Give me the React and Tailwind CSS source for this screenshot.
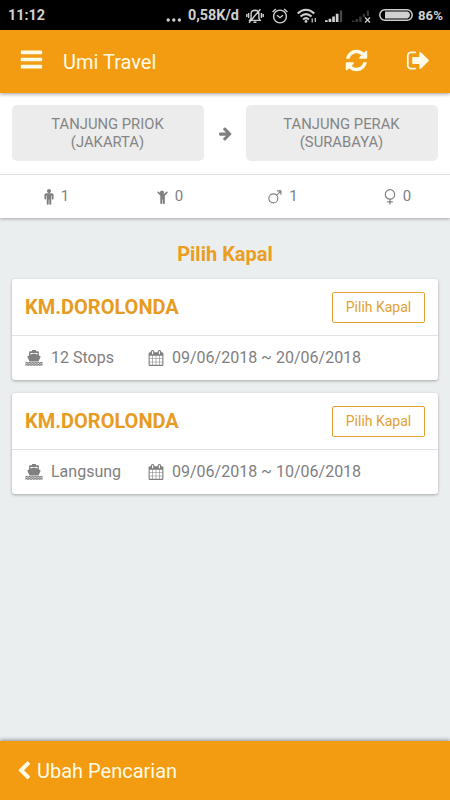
const paths = {
  bars: 'M1664 1344v128q0 26-19 45t-45 19h-1408q-26 0-45-19t-19-45v-128q0-26 19-45t45-19h1408q26 0 45 19t19 45zm0-512v128q0 26-19 45t-45 19h-1408q-26 0-45-19t-19-45v-128q0-26 19-45t45-19h1408q26 0 45 19t19 45zm0-512v128q0 26-19 45t-45 19h-1408q-26 0-45-19t-19-45v-128q0-26 19-45t45-19h1408q26 0 45 19t19 45z',
  refresh: 'M1639 1056q0 5-1 7-64 268-268 434.5t-478 166.5q-146 0-282.5-55t-243.5-157l-129 129q-19 19-45 19t-45-19-19-45v-448q0-26 19-45t45-19h448q26 0 45 19t19 45-19 45l-137 137q71 66 161 102t187 36q134 0 250-65t186-179q11-17 53-117 8-23 30-23h192q13 0 22.5 9.5t9.5 22.5zm25-800v448q0 26-19 45t-45 19h-448q-26 0-45-19t-19-45 19-45l138-138q-148-137-349-137-134 0-250 65t-186 179q-11 17-53 117-8 23-30 23h-199q-13 0-22.5-9.5t-9.5-22.5v-7q65-268 270-434.5t480-166.5q146 0 284 55.5t245 156.5l130-129q19-19 45-19t45 19 19 45z',
  signOut: 'M704 1440q0 4 1 20t.5 26.5-3 23.5-10 19.5-20.5 6.5h-320q-119 0-203.5-84.5t-84.5-203.5v-704q0-119 84.5-203.5t203.5-84.5h320q13 0 22.5 9.5t9.5 22.5q0 4 1 20t.5 26.5-3 23.5-10 19.5-20.5 6.5h-320q-66 0-113 47t-47 113v704q0 66 47 113t113 47h312l11.5 1 11.5 3 8 5.5 7 9 2 13.5zm928-544q0 26-19 45l-544 544q-19 19-45 19t-45-19-19-45v-288h-448q-26 0-45-19t-19-45v-384q0-26 19-45t45-19h448v-288q0-26 19-45t45-19 45 19l544 544q19 19 19 45z',
  chevronLeft: 'M1427 301l-531 531 531 531q19 19 19 45t-19 45l-166 166q-19 19-45 19t-45-19l-742-742q-19-19-19-45t19-45l742-742q19-19 45-19t45 19l166 166q19 19 19 45t-19 45z',
  arrowRight: 'M1600 960q0 54-37 91l-651 651q-39 37-91 37-51 0-90-37l-75-75q-38-38-38-91t38-91l293-293h-704q-52 0-84.5-37.5t-32.5-90.5v-128q0-53 32.5-90.5t84.5-37.5h704l-293-294q-38-36-38-90t38-90l75-75q38-38 90-38 53 0 91 38l651 651q37 35 37 90z',
  male: 'M1408 672v416q0 40-28 68t-68 28-68-28-28-68v-352h-64v912q0 46-33 79t-79 33-79-33-33-79v-464h-64v464q0 46-33 79t-79 33-79-33-33-79v-912h-64v352q0 40-28 68t-68 28-68-28-28-68v-416q0-80 56-136t136-56h640q80 0 136 56t56 136zm-288-448q0 93-65.5 158.5t-158.5 65.5-158.5-65.5-65.5-158.5 65.5-158.5 158.5-65.5 158.5 65.5 65.5 158.5z',
  child: 'M1508 452l-292 292v824q0 46-33 79t-79 33-79-33-33-79v-384h-64v384q0 46-33 79t-79 33-79-33-33-79v-824l-292-292q-28-28-28-68t28-68q29-28 68.5-28t67.5 28l228 228h368l228-228q28-28 68-28t68 28q28 29 28 68.5t-28 67.5zm-388-68q0 93-65.5 158.5t-158.5 65.5-158.5-65.5-65.5-158.5 65.5-158.5 158.5-65.5 158.5 65.5 65.5 158.5z',
  calendar: 'M192 1664h288v-288h-288v288zm352 0h320v-288h-320v288zm-352-352h288v-320h-288v320zm352 0h320v-320h-320v320zm-352-384h288v-288h-288v288zm736 736h320v-288h-320v288zm-384-736h320v-288h-320v288zm768 736h288v-288h-288v288zm-384-352h320v-320h-320v320zm-352-864v-288q0-13-9.5-22.5t-22.5-9.5h-64q-13 0-22.5 9.5t-9.5 22.5v288q0 13 9.5 22.5t22.5 9.5h64q13 0 22.5-9.5t9.5-22.5zm736 864h288v-320h-288v320zm-384-384h320v-288h-320v288zm384 0h288v-288h-288v288zm32-480v-288q0-13-9.5-22.5t-22.5-9.5h-64q-13 0-22.5 9.5t-9.5 22.5v288q0 13 9.5 22.5t22.5 9.5h64q13 0 22.5-9.5t9.5-22.5zm384-64v1280q0 52-38 90t-90 38h-1408q-52 0-90-38t-38-90v-1280q0-52 38-90t90-38h128v-96q0-66 47-113t113-47h64q66 0 113 47t47 113v96h384v-96q0-66 47-113t113-47h64q66 0 113 47t47 113v96h128q52 0 90 38t38 90z'
}

const Icon = ({ name, className }) => (
  <svg viewBox="0 0 1792 1792" fill="currentColor" className={`shrink-0 ${className}`}>
    <path d={paths[name]} />
  </svg>
)

const MarsIcon = () => (
  <svg viewBox="0 0 15 15" fill="none" stroke="currentColor" strokeWidth="1.2" className="w-[14px] h-[14px]">
    <circle cx="5.7" cy="9" r="4.8" />
    <path d="M9 5.7 13.6 1.1M9.6 1h4.2v4.2" />
  </svg>
)

const VenusIcon = () => (
  <svg viewBox="0 0 12 16" fill="none" stroke="currentColor" strokeWidth="1.2" className="w-3 h-4">
    <circle cx="6" cy="5.4" r="4.7" />
    <path d="M6 10v5.6M3.2 12.9h5.6" />
  </svg>
)

const ShipIcon = () => (
  <svg viewBox="0 0 18 16" className="w-[18px] h-4 shrink-0" fill="currentColor">
    <path d="M7 0h4v1.3h2q.9 0 .9.9v3.4l1.2.4q.8.4.4 1.1l-2 4.4H4.5l-2-4.4q-.4-.7.4-1.1l1.2-.4V2.2q0-.9.9-.9h2zM5.5 2.9v1.7L9 3.5l3.5 1.1V2.9z" />
    <path
      d="M.3 13.2 1.7 12.4l1.5.8 1.4-.8 1.5.8 1.4-.8 1.5.8 1.5-.8 1.4.8 1.5-.8 1.4.8 1.5-.8 1.4.8M.3 15.2l1.4-.8 1.5.8 1.4-.8 1.5.8 1.4-.8 1.5.8 1.5-.8 1.4.8 1.5-.8 1.4.8 1.5-.8 1.4.8"
      fill="none"
      stroke="currentColor"
      strokeWidth="1.2"
    />
  </svg>
)

const StatusBar = () => (
  <div className="h-[30px] shrink-0 bg-black text-[#d0d0d0] flex items-center pt-px pl-2 pr-[7px]">
    <span className="text-[14.4px] font-bold leading-none pt-[2px]">11:12</span>
    <svg viewBox="0 0 16 4" className="w-4 h-1 ml-auto mt-2" fill="currentColor">
      <circle cx="2.2" cy="2" r="1.7" />
      <circle cx="7.8" cy="2" r="1.7" />
      <circle cx="13.4" cy="2" r="1.7" />
    </svg>
    <span className="text-[14.4px] font-bold leading-none pt-[2px] ml-[6px] w-[51px] whitespace-nowrap">0,58K/d</span>
    {/* Muted bell */}
    <svg viewBox="0 0 18 16" className="w-[18px] h-4 ml-[7px]" fill="none" stroke="currentColor" strokeWidth="1.4">
      <path d="M3.8 12.4h10.4l-1.3-2V6q0-3.5-3.9-3.7Q5.1 2.5 5.1 6v4.4zM7.6 13.7q1.4 1.3 2.8 0M3 14.7 14.4 1.2M2.6 5v5M15.4 5v5M.8 6v3M17.2 6v3" />
    </svg>
    {/* Alarm clock */}
    <svg viewBox="0 0 16 16" className="w-4 h-4 ml-2" fill="none" stroke="currentColor" strokeWidth="1.4">
      <circle cx="8" cy="8.5" r="6.4" />
      <path d="M4.9 7.3 8 9.7l3-2.5M.6 3.9 3.9.9M15.4 3.9 12.1.9" />
    </svg>
    <svg viewBox="0 0 20 16" className="w-5 h-4 ml-[9px]" fill="none" stroke="currentColor" strokeWidth="2">
      <path d="M.7 5.6q8.3-7.6 16.6 0M3.5 8.6q5.5-5 11 0M6.1 11.4q2.9-2.6 5.8 0" />
      <circle cx="9" cy="13.4" r="1.4" fill="currentColor" stroke="none" />
      <path d="M15.2 10.6v4M18.3 10v4" strokeWidth="1.2" />
    </svg>
    <svg viewBox="0 0 18 14" className="w-[18px] h-[14px] ml-2" fill="currentColor">
      <path d="M0 11.3h2.7V13H0zM3.6 9.8h2.7V13H3.6zM7.2 7.5h2.7V13H7.2zM10.8 4.7h2.7V13h-2.7z" />
      <path d="M14.9 1.5h2.2V13h-2.2z" fill="#4a4a4a" />
    </svg>
    <svg viewBox="0 0 20 14" className="w-5 h-[14px] ml-[9px]" fill="#3b3b3b">
      <path d="M0 11.5h2.5V13H0zM3.6 10h2.5v3H3.6zM7.2 7.5h2.5V13H7.2zM10.8 5h2.3v3h-2.3zM14.9 1.5h2V7h-2z" />
      <path d="m13 8.5 5 5M18 8.5l-5 5" stroke="#d0d0d0" strokeWidth="1.4" />
    </svg>
    <svg viewBox="0 0 34 12" className="w-[34px] h-3 ml-[7px] mb-px">
      <rect x=".8" y=".8" width="32.4" height="10.4" rx="5.2" fill="none" stroke="currentColor" strokeWidth="1.5" />
      <path d="M6 2.6h22.5q2.5.8 2.5 3.4t-2.5 3.4H6z" fill="currentColor" />
    </svg>
    <span className="text-[13.2px] font-bold leading-none ml-[5px] w-[25px] whitespace-nowrap">86%</span>
  </div>
)

const Port = ({ name, city }) => (
  <div className="flex-1 h-14 pt-px pr-px rounded-[5px] bg-[#ececec] flex flex-col items-center justify-center text-[14.8px] leading-[17.5px] text-[#858585]">
    <span>{name}</span>
    <span>({city})</span>
  </div>
)

const trips = [
  { id: 1, ship: 'KM.DOROLONDA', route: '12 Stops', dates: '09/06/2018 ~ 20/06/2018' },
  { id: 2, ship: 'KM.DOROLONDA', route: 'Langsung', dates: '09/06/2018 ~ 10/06/2018' }
]

const passengers = [
  { id: 'adult', icon: <Icon name="male" className="w-4 h-4 -mx-[3px]" />, count: 1 },
  { id: 'child', icon: <Icon name="child" className="w-4 h-4 -mx-[2px]" />, count: 0 },
  { id: 'men', icon: <MarsIcon />, count: 1 },
  { id: 'women', icon: <VenusIcon />, count: 0 }
]

const App = () => {
  return (
    <div className="w-[450px] h-[800px] flex flex-col overflow-hidden bg-[#eaeeef] font-[Roboto,sans-serif] text-[#808080]">
      <StatusBar />

      <header className="relative z-10 h-[63px] shrink-0 bg-[#f39c12] text-[#fffbe6] flex items-center pl-[19px] pr-[19px] shadow-[0_1px_4px_rgba(0,0,0,0.4)]">
        <Icon name="bars" className="w-[25px] h-[25px] mb-[4px]" />
        <h1 className="ml-[19px] text-[20px] leading-6">Umi Travel</h1>
        <Icon name="refresh" className="w-[25px] h-[25px] ml-auto mb-[2px]" />
        <Icon name="signOut" className="w-[25px] h-[25px] ml-[37px] mb-[3px]" />
      </header>

      {/* Search summary */}
      <section className="shrink-0 h-[125px] bg-white shadow-[0_1px_3px_rgba(0,0,0,0.3)]">
        <div className="h-[82px] px-3 pt-3 flex border-b border-[#e2e2e2]">
          <Port name="TANJUNG PRIOK" city="JAKARTA" />
          <div className="w-[42px] h-14 flex items-center justify-center">
            <Icon name="arrowRight" className="w-[15px] h-[15px]" />
          </div>
          <Port name="TANJUNG PERAK" city="SURABAYA" />
        </div>
        <div className="h-[43px] grid grid-cols-[113px_113px_114px_110px]">
          {passengers.map(p => (
            <div key={p.id} className="flex items-center justify-center gap-[7px] text-[15px] last:pl-[5px]">
              {p.icon}
              <span>{p.count}</span>
            </div>
          ))}
        </div>
      </section>

      <main className="flex-1 px-3 pt-6">
        <h2 className="text-center text-[20px] leading-[25px] font-bold text-[#ec9d1e]">Pilih Kapal</h2>
        <div className="mt-3 flex flex-col gap-[13px]">
          {trips.map(trip => (
            <div key={trip.id} className="h-[101px] bg-white rounded-[3px] shadow-[0_1px_3px_rgba(0,0,0,0.3)]">
              <div className="h-[57px] pl-[13px] pr-[13px] flex items-center justify-between border-b border-[#e2e2e2]">
                <span className="text-[20px] font-bold text-[#e79b22]">{trip.ship}</span>
                <button className="w-[93px] h-[31px] border border-[#e3a132] rounded-[2px] text-[14px] leading-none text-[#e3a132]">
                  Pilih Kapal
                </button>
              </div>
              <div className="h-11 pl-[13px] flex items-center text-base">
                <ShipIcon />
                <span className="ml-2 w-[97px]">{trip.route}</span>
                <Icon name="calendar" className="w-4 h-4" />
                <span className="ml-2">{trip.dates}</span>
              </div>
            </div>
          ))}
        </div>
      </main>

      <footer className="h-[59px] shrink-0 bg-[#f39c12] text-[#fffbe6] flex items-center pl-[14px] shadow-[0_-1px_4px_rgba(0,0,0,0.4)]">
        <Icon name="chevronLeft" className="w-5 h-5" />
        <span className="ml-[3px] text-[20px]">Ubah Pencarian</span>
      </footer>
    </div>
  )
}

export default App
